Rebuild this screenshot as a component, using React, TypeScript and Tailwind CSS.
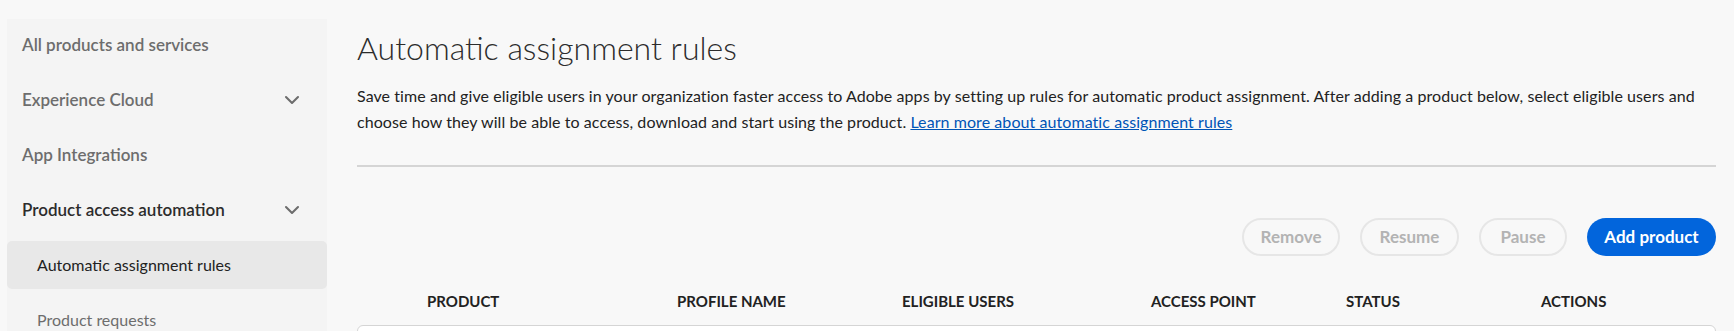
import { ChevronDown } from "lucide-react";

const navItems = [
  { label: "All products and services", chevron: false, strong: false },
  { label: "Experience Cloud", chevron: true, strong: false },
  { label: "App Integrations", chevron: false, strong: false },
  { label: "Product access automation", chevron: true, strong: true },
];

const columns = ["PRODUCT", "PROFILE NAME", "ELIGIBLE USERS", "ACCESS POINT", "STATUS", "ACTIONS"];

const Sidebar = () => (
  <aside className="w-[320px] shrink-0 mt-[19px] bg-[#f4f4f4] pt-[2px] flex flex-col gap-[7px]">
    {navItems.map((item) => (
      <div key={item.label} className="h-[48px] shrink-0 flex items-center justify-between pl-[15px] pr-[23px]">
        <span className={`text-[17px] font-semibold ${item.strong ? "text-[#2c2c2c]" : "text-[#6d6d6d]"}`}>
          {item.label}
        </span>
        {item.chevron && <ChevronDown size={24} strokeWidth={2.1} className="text-[#6d6d6d]" />}
      </div>
    ))}
    <div className="h-[48px] shrink-0 flex items-center pl-[30px] rounded-[5px] bg-[#e8e8e8]">
      <span className="text-[16px] text-[#222]">Automatic assignment rules</span>
    </div>
    <div className="h-[48px] shrink-0 flex items-center pl-[30px]">
      <span className="text-[16px] text-[#6d6d6d]">Product requests</span>
    </div>
  </aside>
);

const Button = ({ label, width, primary }: { label: string; width: string; primary?: boolean }) => (
  <button
    className={`${width} h-[38px] flex items-center justify-center rounded-full text-[17px] font-bold whitespace-nowrap ${
      primary ? "bg-[#0265dc] text-white" : "border-2 border-[#e6e6e6] text-[#b3b3b3]"
    }`}
  >
    {label}
  </button>
);

export default function App() {
  return (
    <div className="w-[1734px] h-[331px] overflow-hidden bg-[#f8f8f8] flex items-start pl-[7px] font-['Lato',sans-serif]">
      <Sidebar />
      <main className="ml-[30px] w-[1359px] shrink-0 flex flex-col">
        <h1 className="mt-[28px] text-[32px] font-light text-[#2c2c2c] leading-[40px]">
          Automatic assignment rules
        </h1>
        <p className="mt-[15px] text-[16px] leading-[26px] text-[#222] tracking-[0.07px]">
          <span className="block whitespace-nowrap">
            Save time and give eligible users in your organization faster access to Adobe apps by setting up rules
            for automatic product assignment. After adding a product below, select eligible users and
          </span>
          <span className="block whitespace-nowrap">
            choose how they will be able to access, download and start using the product.{" "}
            <a className="text-[#0054b6] underline">Learn more about automatic assignment rules</a>
          </span>
        </p>
        <div className="mt-[30px] h-[2px] bg-[#d5d5d5]" />
        <div className="mt-[51px] flex justify-end gap-[20px]">
          <Button label="Remove" width="w-[98px]" />
          <Button label="Resume" width="w-[99px]" />
          <Button label="Pause" width="w-[88px]" />
          <Button label="Add product" width="w-[129px]" primary />
        </div>
        <div className="h-[69px] pb-[14px] grid grid-cols-[70px_250px_225px_249px_195px_195px_1fr] items-end">
          <div />
          {columns.map((c) => (
            <div key={c} className="text-[15px] leading-[20px] font-bold text-[#222]">
              {c}
            </div>
          ))}
        </div>
        <div className="h-[40px] rounded-t-[6px] border border-[#d5d5d5] bg-white" />
      </main>
    </div>
  );
}
